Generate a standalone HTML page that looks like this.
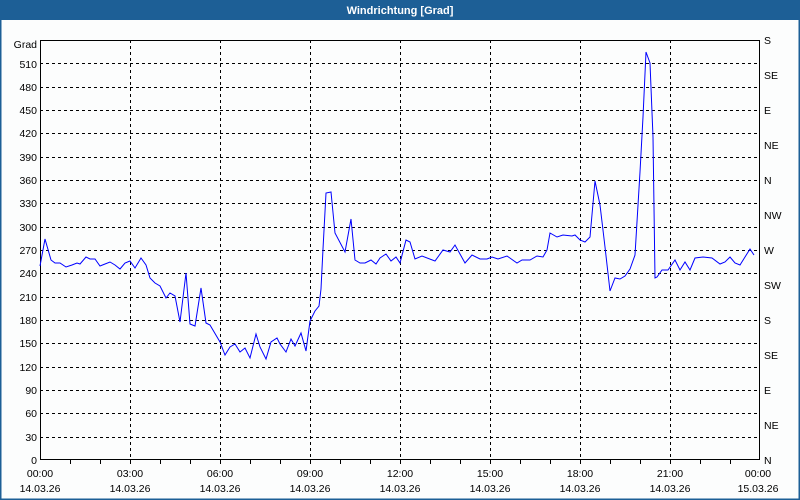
<!DOCTYPE html>
<html><head><meta charset="utf-8"><style>
html,body{margin:0;padding:0;background:#fff;}
body{width:800px;height:500px;overflow:hidden;position:relative;font-family:"Liberation Sans",sans-serif;}
</style></head><body>
<svg width="800" height="500" xmlns="http://www.w3.org/2000/svg" style="position:absolute;left:0;top:0" font-family="Liberation Sans, sans-serif" font-size="10.5">
<rect x="0" y="0" width="800" height="500" fill="#fcfdfd"/>
<rect x="0" y="0" width="800" height="20" fill="#1d5f96"/>
<rect x="0" y="0" width="1.5" height="500" fill="#1d5f96"/>
<rect x="798.5" y="0" width="1.5" height="500" fill="#1d5f96"/>
<rect x="0" y="498.5" width="800" height="1.5" fill="#1d5f96"/>
<text x="400" y="14" fill="#fff" font-weight="bold" font-size="11" text-anchor="middle">Windrichtung [Grad]</text>
<g stroke="#000" stroke-width="1" stroke-dasharray="3,3" shape-rendering="crispEdges">
<line x1="130.5" y1="40" x2="130.5" y2="460"/><line x1="220.5" y1="40" x2="220.5" y2="460"/><line x1="310.5" y1="40" x2="310.5" y2="460"/><line x1="400.5" y1="40" x2="400.5" y2="460"/><line x1="490.5" y1="40" x2="490.5" y2="460"/><line x1="580.5" y1="40" x2="580.5" y2="460"/><line x1="670.5" y1="40" x2="670.5" y2="460"/>
<line x1="40" y1="437.5" x2="760" y2="437.5"/><line x1="40" y1="413.5" x2="760" y2="413.5"/><line x1="40" y1="390.5" x2="760" y2="390.5"/><line x1="40" y1="367.5" x2="760" y2="367.5"/><line x1="40" y1="343.5" x2="760" y2="343.5"/><line x1="40" y1="320.5" x2="760" y2="320.5"/><line x1="40" y1="297.5" x2="760" y2="297.5"/><line x1="40" y1="273.5" x2="760" y2="273.5"/><line x1="40" y1="250.5" x2="760" y2="250.5"/><line x1="40" y1="227.5" x2="760" y2="227.5"/><line x1="40" y1="203.5" x2="760" y2="203.5"/><line x1="40" y1="180.5" x2="760" y2="180.5"/><line x1="40" y1="157.5" x2="760" y2="157.5"/><line x1="40" y1="133.5" x2="760" y2="133.5"/><line x1="40" y1="110.5" x2="760" y2="110.5"/><line x1="40" y1="87.5" x2="760" y2="87.5"/><line x1="40" y1="63.5" x2="760" y2="63.5"/>
</g>
<g stroke="#000" stroke-width="1" fill="none" shape-rendering="crispEdges">
<rect x="40.5" y="40.5" width="719" height="419"/>
<path d="M70.5 460v4M100.5 460v4M130.5 460v4M160.5 460v4M190.5 460v4M220.5 460v4M250.5 460v4M280.5 460v4M310.5 460v4M340.5 460v4M370.5 460v4M400.5 460v4M430.5 460v4M460.5 460v4M490.5 460v4M520.5 460v4M550.5 460v4M580.5 460v4M610.5 460v4M640.5 460v4M670.5 460v4M700.5 460v4M730.5 460v4"/>
</g>
<polyline fill="none" stroke="#0000ff" stroke-width="1" points="40,266 45,239 51,260 55,263 60,263 66,267 72,265 77,263 80,264 86,257 90,259 95,259 100,266 105,264 110,262 115,265 120,269 125,263 130,261 135,268 141,258 146,265 150,278 155,283 160,286 166,298 170,293 175,296 180,322 186,273 190,324 195,326 201,288 206,323 210,325 220,342 225,355 230,347 235,344 240,352 245,348 250,358 256,334 260,347 266,359 271,342 277,338 280,344 286,352 291,339 295,346 301,333 306,351 310,321 315,311 319,306 321,289 323,249 326,193 331,192 335,233 345,252 351,219 355,260 360,263 365,263 371,260 376,264 380,258 386,254 391,261 396,257 400,263 406,240 410,242 415,259 422,256 435,261 443,250 450,252 455,245 465,263 472,255 480,259 487,259 492,257 498,259 507,256 517,263 522,260 530,260 537,256 543,257 547,250 550,233 557,237 563,235 572,236 575,235 580,240 585,242 590,237 595,181 600,205 605,247 610,291 615,278 620,279 625,276 630,269 635,255 640,172 643,117 646,52 650,63 653,137 655,278 657,277 662,270 668,270 675,260 680,270 685,262 690,270 695,258 703,257 712,258 720,264 725,262 730,257 735,263 740,265 745,257 750,249 754,255"/>
<g fill="#000" text-anchor="end">
<text x="37" y="48">Grad</text>
<text x="37" y="68">510</text><text x="37" y="91">480</text><text x="37" y="114">450</text><text x="37" y="137">420</text><text x="37" y="161">390</text><text x="37" y="184">360</text><text x="37" y="207">330</text><text x="37" y="231">300</text><text x="37" y="254">270</text><text x="37" y="277">240</text><text x="37" y="301">210</text><text x="37" y="324">180</text><text x="37" y="347">150</text><text x="37" y="371">120</text><text x="37" y="394">90</text><text x="37" y="417">60</text><text x="37" y="441">30</text><text x="37" y="464">0</text>
</g>
<g fill="#000">
<text x="764" y="44">S</text><text x="764" y="79">SE</text><text x="764" y="114">E</text><text x="764" y="149">NE</text><text x="764" y="184">N</text><text x="764" y="219">NW</text><text x="764" y="254">W</text><text x="764" y="289">SW</text><text x="764" y="324">S</text><text x="764" y="359">SE</text><text x="764" y="394">E</text><text x="764" y="429">NE</text><text x="764" y="464">N</text>
</g>
<g fill="#000" text-anchor="middle">
<text x="40" y="477">00:00</text><text x="130" y="477">03:00</text><text x="220" y="477">06:00</text><text x="310" y="477">09:00</text><text x="400" y="477">12:00</text><text x="490" y="477">15:00</text><text x="580" y="477">18:00</text><text x="670" y="477">21:00</text><text x="758" y="477">00:00</text>
<text x="40" y="492">14.03.26</text><text x="130" y="492">14.03.26</text><text x="220" y="492">14.03.26</text><text x="310" y="492">14.03.26</text><text x="400" y="492">14.03.26</text><text x="490" y="492">14.03.26</text><text x="580" y="492">14.03.26</text><text x="670" y="492">14.03.26</text><text x="758" y="492">15.03.26</text>
</g>
</svg>
</body></html>
